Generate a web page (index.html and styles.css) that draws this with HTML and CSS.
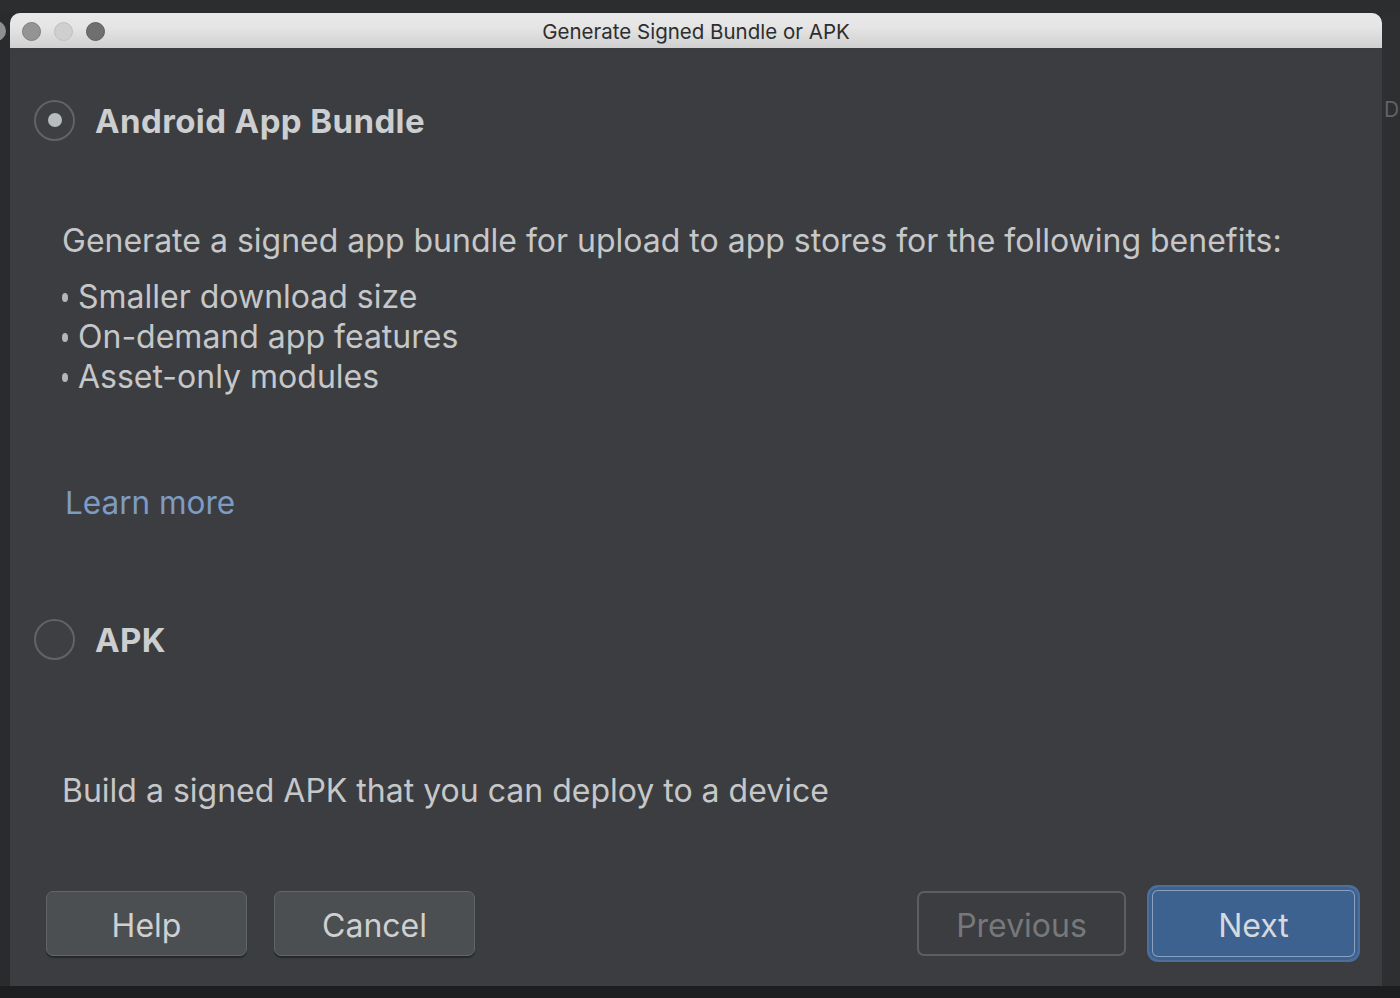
FILE: index.html
```html
<!DOCTYPE html>
<html>
<head>
<meta charset="utf-8">
<link rel="stylesheet" href="styles.css">
</head>
<body>
<div class="desk">
  <div class="top-strip"></div>
  <div class="middle">
    <div class="left-stub"><span class="stub-dot"></span></div>
    <div class="window">
      <div class="titlebar">
        <div class="lights">
          <span class="light l1"></span>
          <span class="light l2"></span>
          <span class="light l3"></span>
        </div>
        <div class="title">Generate Signed Bundle or APK</div>
      </div>
      <div class="content">
        <div class="option">
          <span class="radio checked"><span class="dot"></span></span>
          <span class="option-label">Android App Bundle</span>
        </div>
        <div class="desc">
          <p class="lead">Generate a signed app bundle for upload to app stores for the following benefits:</p>
          <ul class="benefits">
            <li>Smaller download size</li>
            <li>On-demand app features</li>
            <li>Asset-only modules</li>
          </ul>
          <a class="learn">Learn more</a>
        </div>
        <div class="option apk">
          <span class="radio"></span>
          <span class="option-label">APK</span>
        </div>
        <p class="lead apk-desc">Build a signed APK that you can deploy to a device</p>
        <div class="buttons">
          <div class="group">
            <button class="btn">Help</button>
            <button class="btn">Cancel</button>
          </div>
          <div class="group">
            <button class="btn disabled">Previous</button>
            <button class="btn primary">Next</button>
          </div>
        </div>
      </div>
    </div>
    <div class="right-stub"><span class="stub-letter">D</span></div>
  </div>
  <div class="bottom-strip"></div>
</div>
</body>
</html>
```
FILE: styles.css
```css
* { box-sizing: border-box; }
html, body { margin: 0; padding: 0; }
body {
  width: 1400px;
  height: 998px;
  overflow: hidden;
  background: #2a2b2d;
  font-family: Inter, "Liberation Sans", Arial, sans-serif;
}
.desk { display: flex; flex-direction: column; height: 998px; }
.top-strip { height: 13px; background: #2c2d2f; }
.middle { display: flex; height: 973px; }
.left-stub { width: 10px; background: #2a2b2d; position: relative; overflow: hidden; }
.stub-dot {
  position: absolute; left: -14px; top: 8px;
  width: 20px; height: 20px; border-radius: 50%;
  background: #8d8f91;
}
.right-stub { flex: 1; background: #2e2f31; position: relative; overflow: hidden; }
.stub-letter {
  position: absolute; left: 2px; top: 84px;
  color: #5f6365; font-size: 21px;
}
.bottom-strip { flex: 1; background: #1d1e1f; }

.window {
  width: 1372px;
  display: flex; flex-direction: column;
  background: #3c3d40;
  border-radius: 10px 10px 0 0;
  overflow: hidden;
}
.titlebar {
  height: 36px;
  position: relative;
  background: linear-gradient(#e7e8e7 0%, #e4e5e4 40%, #cfd0cf 100%);
  border-bottom: 1px solid #3a3b3c;
  display: flex; align-items: center; justify-content: center;
}
.lights { position: absolute; left: 12px; top: 9px; display: flex; gap: 13px; }
.light { width: 19px; height: 19px; border-radius: 50%; display: block; }
.l1 { background: #929495; border: 1px solid #7d7f80; }
.l2 { background: #cfcfcf; border: 1px solid #bfbfbf; }
.l3 { background: #6d706f; border: 1px solid #5c5f5e; }
.title {
  color: #2e2e2e; font-size: 20.5px;
  margin-left: 0; margin-top: 2px;
}

.content {
  flex: 1;
  display: flex; flex-direction: column;
  padding: 49px 22px 0 24px;
  color: #c9cacb;
}
.option { display: flex; align-items: center; height: 44px; }
.radio {
  width: 41px; height: 41px; border-radius: 50%;
  border: 2px solid #5f6466;
  background: #3d3f42;
  display: flex; align-items: center; justify-content: center;
  flex: none;
}
.dot { width: 14px; height: 14px; border-radius: 50%; background: #b9bcbe; }
.option-label {
  margin-left: 20px;
  font-weight: 700; font-size: 33px; letter-spacing: 0.4px; color: #cdcecf;
  margin-top: 2px;
}
.desc { padding-left: 28px; }
.lead {
  margin: 0; font-size: 32px; color: #c6c7c8; line-height: 40px;
}
.desc .lead { margin-top: 79px; }
.benefits { list-style: none; margin: 16px 0 0 0; padding: 0; }
.benefits li {
  font-size: 32px; line-height: 40px; color: #c6c7c8;
  display: flex; align-items: center;
}
.benefits li::before {
  content: ""; width: 6px; height: 9px; border-radius: 50%;
  background: #b4b6b7; margin-right: 10px; margin-top: 1px;
}
.learn {
  display: block; margin-top: 86px; margin-left: 3px;
  font-size: 31.5px; line-height: 40px; color: #7e9bc4;
}
.apk { margin-top: 94px; }
.apk-desc { margin-left: 28px; margin-top: 110px; }

.buttons {
  margin-top: 74px;
  display: flex; justify-content: space-between;
  padding: 0 0 0 12px;
  align-items: center;
}
.group { display: flex; gap: 27px; align-items: center; }
.btn {
  width: 201px; height: 65px;
  font-family: Inter, "Liberation Sans", Arial, sans-serif;
  font-size: 32px; color: #cfd0d1;
  background: #4b4f51;
  border: 1px solid #626667;
  border-radius: 7px;
  box-shadow: 0 2px 1px rgba(0,0,0,0.35);
  padding: 4px 0 0 0;
}
.btn.disabled {
  width: 209px;
  background: transparent; color: #76797b;
  border: 2px solid #5c5f61; box-shadow: none;
  margin-right: -6px;
}
.btn.primary {
  width: 213px; height: 77px;
  background: #3e6290;
  border: 2px solid #4c6e9b;
  border-radius: 11px;
  box-shadow: inset 0 0 0 3px #3e6290, inset 0 0 0 4px #8aa0c0;
  color: #d6d9dd;
  margin-right: 0;
}
```
